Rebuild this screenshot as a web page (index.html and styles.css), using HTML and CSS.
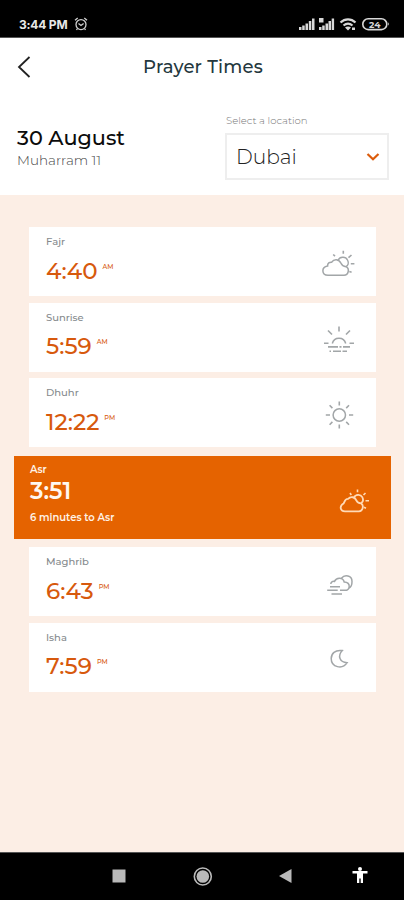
FILE: index.html
```
<!DOCTYPE html>
<html lang="en">
<head>
<meta charset="utf-8">
<title>Prayer Times</title>
<link rel="stylesheet" href="styles.css">
</head>
<body>
<div class="status">
  <span class="clock">3:44 PM</span>
  <svg class="alarm" width="14" height="14" viewBox="0 0 14 14" fill="none" stroke="#d0d0d0" stroke-width="1.3"><circle cx="7" cy="7.600" r="5"/><path d="M1 3.200 3.700 1M13 3.200 10.300 1M4.500 6.500 7 8.500 9.600 6.500M3.500 11.500 2.500 13M10.500 11.500l1 1.500"/></svg>
  <svg class="signals" width="92" height="16" viewBox="0 0 92 16" fill="#d8d8d8">
    <path d="M0 11h2.500v3H0zM3.200 9.500h2.500V14H3.200zM6.500 7.500H9V14H6.500zM9.800 5h2.500v9H9.800zM13 2.500h2.500V14H13z"/>
    <path d="M20 11h2.500v3H20zM23.200 9.500h2.500V14h-2.500zM26.500 7.500H29V14h-2.500zM29.500 5H32v9h-2.500zM32.700 2.500h2.400V14h-2.400zM20 2h4.500v4.500H20z"/>
    <g fill="none" stroke="#d8d8d8" stroke-width="2.200"><path d="M41.500 6.500c4.500-4.200 10.500-4.200 15 0M44.500 9.500c2.800-2.400 6.200-2.400 9 0"/></g>
    <path d="m46 11.500 3 3 3-3c-1.800-1.500-4.200-1.500-6 0zM53 11.500h3V14h-3z"/>
    <rect x="63.800" y="2.800" width="24" height="10.800" rx="5.400" fill="none" stroke="#d8d8d8" stroke-width="1.600"/>
    <path d="M89 6.500c1 .5 1 2.500 0 3z"/>
    <text class="battery" x="75.800" y="11.500" text-anchor="middle">24</text>
  </svg>
</div>
<header class="bar">
  <svg class="back" width="16" height="24" viewBox="0 0 16 24" fill="none" stroke="#222" stroke-width="1.800"><path d="M12.500 2 2 12l10.500 10"/></svg>
  <h1 class="title">Prayer Times</h1>
</header>
<section class="info">
  <div class="dates">
    <div class="date">30 August</div>
    <div class="hijri">Muharram 11</div>
  </div>
  <div class="location">
    <div class="hint">Select a location</div>
    <div class="select"><span class="city">Dubai</span>
      <svg width="14" height="10" viewBox="0 0 14 10" fill="none" stroke="#dc5c0c" stroke-width="2.200"><path d="M1.500 2 7 7.300 12.500 2"/></svg>
    </div>
  </div>
</section>
<main class="list">
  <article class="card">
    <div class="name">Fajr</div>
    <div class="time"><span>4:40</span><small>AM</small></div>
    <svg class="icon" width="36" height="32" viewBox="0 0 36 32"><path d="M7 26.300C.5 26.300 0 18 6.600 17 6.500 14 8.500 13 10.700 13.200 13 9.500 18 9.800 20 14.300c.8 2 2.500 3.200 5 3.400 4 2 2.500 8.600-2 8.600z"/><path d="M17 11.500c1.500-4 7.500-4.500 9.500-.5 1.600 3 .5 5.600-1.500 6.700"/><path class="rays" d="M22.300 1.800v3M12.200 5.500l1.800 1.700M30.500 6l-3 2.700M29.800 14.800h3.600M28.300 22.500l2.300.8"/></svg>
  </article>
  <article class="card">
    <div class="name">Sunrise</div>
    <div class="time"><span>5:59</span><small>AM</small></div>
    <svg class="icon" width="36" height="32" viewBox="0 0 36 32"><path d="M11.300 19.500a6.900 6.900 0 0 1 13.400 0"/><path class="rays" d="M18 2.500v5M7 6.500l4 4M29 6.500l-4 4M3 19.300h4.500M28.500 19.300H33M7 22.900h10M18.500 22.900h2M22 22.900h7M8.500 27.200h1.500M12 27.200h8M21.500 27.200h4.500"/></svg>
  </article>
  <article class="card">
    <div class="name">Dhuhr</div>
    <div class="time"><span>12:22</span><small>PM</small></div>
    <svg class="icon" width="36" height="32" viewBox="0 0 36 32"><circle cx="18.300" cy="15" r="6.200"/><path class="rays" d="M18.300 1.500v4M18.300 24.500v4M4.800 15h4.200M28 15h4.200M8.600 5.300l2.800 2.800M28 5.300l-2.800 2.800M8.600 24.700l2.800-2.800M28 24.700l-2.800-2.800"/></svg>
  </article>
  <article class="card active">
    <div class="name">Asr</div>
    <div class="time"><span>3:51</span></div>
    <div class="left">6 minutes to Asr</div>
    <svg class="icon" width="36" height="32" viewBox="0 0 36 32"><path d="M9 26.300c-5 0-5.800-5.300-1.500-7.800 1.200-1 1-4.800 4.500-4.600 3-3 7-2 8.500 1.800.6 1.600 2 2.500 4.500 2.600 3.500 2.500 1.500 8-2 8z"/><path d="M18 12.500c1.500-3.300 6.500-3.600 8.300-.4 1.300 2.600.6 4.900-1.300 6.100"/><path class="rays" d="M21.500 4.500v2.800M14 8l1.300 2M29.500 8l-2 2M29.500 15.700H33M28 22.300l2 .9"/></svg>
  </article>
  <article class="card">
    <div class="name">Maghrib</div>
    <div class="time"><span>6:43</span><small>PM</small></div>
    <svg class="icon" width="36" height="32" viewBox="0 0 36 32"><path d="M9.800 15c0-2 1.700-3 3.700-2.600 2-4.400 8.500-4.200 9.700.6 3.500 0 5.300 2 5 4.800-.3 2.300-2 3.500-4.200 3.500h-5"/><path d="M20.500 9.300c3-4 10.500-3 10.500 3.200 0 3.500-1 5.500-2.800 6.500"/><path d="M9 17.700h10M6.200 21.300h10.500M10.500 25H21"/></svg>
  </article>
  <article class="card">
    <div class="name">Isha</div>
    <div class="time"><span>7:59</span><small>PM</small></div>
    <svg class="icon" width="36" height="32" viewBox="0 0 36 32"><path d="M21.300 6.600C14 5.500 10.200 9.800 10.200 14.500c0 9 11.300 11.300 15.900 4.200C18.600 18.400 16.300 12 21.300 6.600z"/></svg>
  </article>
</main>
<nav class="nav">
  <svg width="404" height="47" viewBox="0 0 404 47" fill="#b9b9b9"><path d="M112.500 16.500h13v13h-13z"/><circle cx="202.800" cy="23.500" r="6.300"/><circle cx="202.800" cy="23.500" r="8.500" fill="none" stroke="#b9b9b9" stroke-width="1.600"/><path d="M279 23l12.500-7v14z"/><g fill="#fff"><circle cx="360" cy="16" r="2"/><path d="M352.500 18h15v2.400H363v9.600h-2.300v-4.500h-1.400V30H357v-9.600h-4.500z"/></g></svg>
</nav>
</body>
</html>
```
FILE: styles.css
```
* { box-sizing: border-box; }
body {
  margin: 0;
  width: 404px;
  height: 900px;
  display: flex;
  flex-direction: column;
  overflow: hidden;
  background: #fceee5;
  font-family: Montserrat, Inter, "Liberation Sans", sans-serif;
}
svg { display: block; flex: none; }
.status {
  height: 38px;
  flex: none;
  background: #000;
  border-bottom: 1px solid #555;
  display: flex;
  align-items: flex-start;
  padding: 16px 13px 0 19px;
}
.clock { color: #e8e8e8; font-family: Inter, "Liberation Sans", sans-serif; font-size: 12px; line-height: 17px; font-weight: 700; letter-spacing: -.2px; width: 55px; white-space: nowrap; }
.alarm { margin-top: 1px; }
.signals { margin-left: auto; }
.battery { font-size: 9px; font-weight: 700; }
.bar {
  height: 58px;
  flex: none;
  background: #fff;
  display: grid;
  grid-template-columns: 16px 1fr 16px;
  align-items: center;
  padding: 0 15px 0 17px;
}
.title { margin: 0; text-align: center; font-size: 18px; line-height: 24px; font-weight: 500; color: #24383e; letter-spacing: .2px; }
.info {
  height: 99px;
  flex: none;
  background: #fff;
  display: flex;
  justify-content: space-between;
  padding: 16px 15px 0 17px;
}
.dates { padding-top: 14px; }
.date { font-size: 20.800px; line-height: 24px; font-weight: 500; color: #0b0b0b; }
.hijri { font-size: 13.500px; line-height: 21px; font-weight: 300; color: #444; }
.location { width: 164px; }
.hint { font-size: 10.100px; line-height: 18px; font-weight: 300; color: #777; padding-left: 1px; }
.select {
  height: 47px;
  margin-top: 3px;
  border: 2px solid #eee;
  display: flex;
  align-items: center;
  justify-content: space-between;
  padding: 0 7px 0 9px;
}
.city { font-size: 20.200px; line-height: 24px; font-weight: 300; color: #222; }
.list { flex: 1; padding: 32.400px 28px 0 29px; }
.card {
  position: relative;
  height: 69px;
  margin-bottom: 6.400px;
  background: #fff;
  padding: 8px 17px;
}
.name { font-size: 10px; line-height: 14px; font-weight: 500; color: #858a8d; }
.time { display: flex; align-items: flex-start; margin-top: 7.500px; font-size: 23px; line-height: 28px; font-weight: 500; color: #d7590d; }
.time small { font-size: 6.500px; line-height: 20px; font-weight: 500; margin-left: 5px; }
.icon { position: absolute; right: 19px; top: 21.500px; fill: none; stroke: #a2a6a8; stroke-width: 1.500; }
.rays { stroke-width: 1.600; }
.active { height: 83.500px; margin: 8.500px -15px 8.200px; background: #e56300; padding: 7.500px 16px; }
.active .name { color: #fff2e6; font-weight: 600; }
.active .time { color: #fff8f0; margin-top: 0; font-weight: 600; }
.active .left { margin-top: 5.500px; font-size: 10px; line-height: 14px; font-weight: 600; color: #fff2e6; }
.active .icon { right: 19px; top: 29px; stroke: #ffdab6; stroke-width: 1.800; }
.nav { height: 48px; flex: none; background: #000; border-top: 1px solid #555; }
```
